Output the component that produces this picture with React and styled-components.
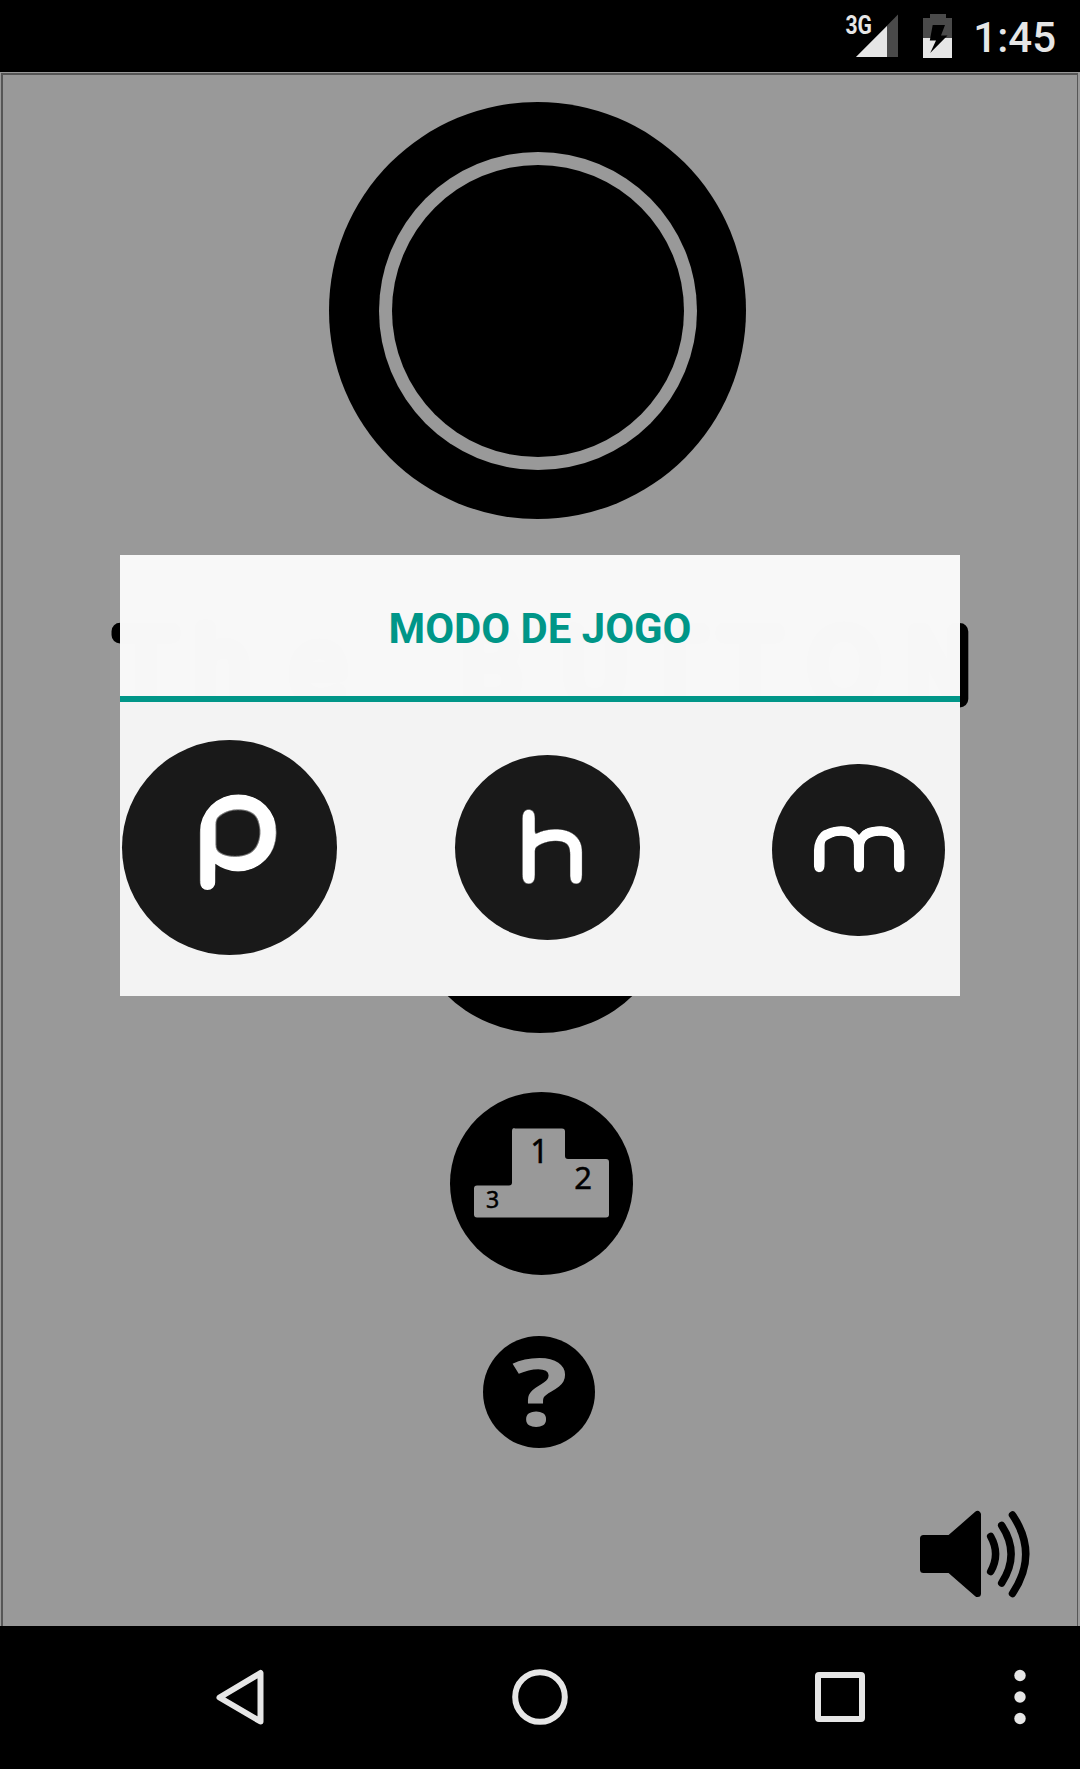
import styled, { createGlobalStyle } from 'styled-components'

const GlobalStyle = createGlobalStyle`
    body {
        margin: 0;
        background-color: #000;
        font-family: Roboto, 'Liberation Sans', sans-serif;
    }

    * {
        box-sizing: border-box;
    }

    svg {
        display: block;
        overflow: visible;
    }

    button {
        border: 0;
        padding: 0;
        background: none;
    }
`

const Screen = styled.div`
    position: relative;
    display: flex;
    flex-direction: column;

    width: 1080px;
    height: 1769px;
    overflow: hidden;
    background-color: #000;
`

const StatusBar = styled.header`
    display: flex;
    align-items: flex-start;
    justify-content: flex-end;
    flex: none;

    height: 72px;
    padding-right: 24px;
`

const StatusIcon = styled.svg`
    margin-right: ${({ $gap }) => $gap}px;
`

const Clock = styled.span`
    padding-top: 13px;

    color: #e6e6e6;
    font-size: 42px;
    font-weight: 500;
    line-height: 50px;
`

const Stage = styled.main`
    flex: 1;

    padding: 1px 2px 0 1px;
    background-color: #999;
`

const Frame = styled.div`
    display: flex;
    flex-direction: column;
    align-items: center;

    height: 100%;
    border: solid #565656;
    border-width: 2px 1px 0 2px;
`

const Disc = styled.div`
    display: flex;
    align-items: center;
    justify-content: center;
    flex: none;

    width: ${({ $size }) => $size}px;
    height: ${({ $size }) => $size}px;
    margin-top: ${({ $top }) => $top || 0}px;
    margin-left: ${({ $shift }) => $shift || 0}px;
    border-radius: 50%;
    background-color: ${({ $color }) => $color || '#000'};
`

const Title = styled.svg`
    flex: none;
    margin-top: 81px;

    fill: #000;
    stroke: #000;
    stroke-linejoin: round;
    font-family: 'DejaVu Sans Light', 'DejaVu Sans', sans-serif;
    font-weight: 200;
`

const Sound = styled.button`
    align-self: flex-end;
    margin-top: 62px;
    margin-right: 47px;
`

const Dialog = styled.section`
    position: absolute;
    top: 555px;
    left: 120px;

    width: 840px;
    height: 441px;
`

const DialogTitle = styled.h1`
    display: flex;
    align-items: center;
    justify-content: center;

    height: 147px;
    margin: 0;
    border-bottom: 6px solid #009688;
    padding-top: 5px;
    background-color: rgba(249, 249, 249, 0.992);
    background-clip: padding-box;

    color: #009688;
    font-size: 41.9px;
    font-weight: 700;
`

const Modes = styled.div`
    display: flex;
    align-items: flex-start;

    height: 294px;
    background-color: #f3f3f3;
`

const LetterSvg = styled.svg`
    fill: #fff;
    font-family: Lato, sans-serif;
    font-weight: 100;
`

const NavBar = styled.nav`
    display: flex;
    align-items: center;
    flex: none;

    height: 143px;
    padding-bottom: 2px;
    padding-left: 216px;
`

const NavButton = styled.button`
    margin-right: ${({ $gap }) => $gap || 0}px;

    svg {
        fill: none;
        stroke: #e6e6e6;
        stroke-width: 6;
        stroke-linejoin: round;
    }
`

const Status = () => (
    <StatusBar>
        <StatusIcon $gap={25} width="54" height="60" viewBox="844 0 54 60">
            <path d="M898 14.500V57H856z" fill="#4a4a4a" />
            <path d="M887 26V57H856z" fill="#e6e6e6" />
            <text x="845.500" y="33.500" fill="#e6e6e6" fontSize="26" fontWeight="700" textLength="26.500" lengthAdjust="spacingAndGlyphs">3G</text>
        </StatusIcon>
        <StatusIcon $gap={21} width="29" height="60" viewBox="923 0 29 60">
            <path d="M930 14h16v4h6v40h-29V18h7z" fill="#4a4a4a" />
            <path d="M923 38h29v20h-29z" fill="#e6e6e6" />
            <path d="M932.700 25H945L941 35.500H947.500L930.200 53L936 40.500H929.800z" fill="#000" />
        </StatusIcon>
        <Clock>1:45</Clock>
    </StatusBar>
)

const Podium = () => (
    <svg width="183" height="183" viewBox="450 1091.500 183 183">
        <path
            d="M514.500 1128h47.500q3 0 3 3v24.500q0 3 3 3h38q3 0 3 3v52.500q0 3-3 3H477q-3 0-3-3v-26q0-3 3-3h32q3 0 3-3v-51.500q0-3 2.500-3z"
            fill="#999"
        />
        <g fill="#000" stroke="#000" strokeWidth="0.500" fontFamily="'Noto Sans', sans-serif" textAnchor="middle">
            <text x="539.500" y="1162" fontSize="32">1</text>
            <text x="583" y="1188.500" fontSize="31">2</text>
            <text x="492.500" y="1207" fontSize="23">3</text>
        </g>
    </svg>
)

const Help = () => (
    <svg width="112" height="112" viewBox="483 1336 112 112">
        <text transform="translate(540 1426) scale(1.24 1)" fill="#999" fontFamily="'Open Sans', sans-serif" fontSize="94" fontWeight="700" textAnchor="middle">?</text>
    </svg>
)

const Speaker = () => (
    <svg width="110" height="88" viewBox="920 1510 110 88" stroke="#000" strokeLinecap="round" strokeLinejoin="round">
        <path d="M923.500 1538.500H950L977.500 1514.500V1593.500L950 1569.500H923.500z" strokeWidth="7" />
        <g fill="none" strokeWidth="7.500">
            <path d="M990.700 1536.500Q1000.500 1554 990.700 1571.500" />
            <path d="M1001.700 1525.500Q1020.500 1554 1001.700 1583" />
            <path d="M1012.500 1515Q1039 1554 1012.500 1593.500" />
        </g>
    </svg>
)

// Thickens a hairline letter evenly, so that stretching it keeps one stroke width with round ends
const Letter = ({ children, size, x, y, scale, fontSize, spread, cutoff, clip }) => (
    <LetterSvg width={size} height={size} viewBox={`0 0 ${size} ${size}`}>
        <defs>
            <filter id={`round-${children}`} filterUnits="userSpaceOnUse" x="0" y="0" width={size} height={size} colorInterpolationFilters="sRGB">
                <feGaussianBlur stdDeviation="1.200" />
                <feComponentTransfer>
                    <feFuncA type="linear" slope="8" intercept="-0.500" />
                </feComponentTransfer>
                <feGaussianBlur stdDeviation={spread} />
                <feComponentTransfer>
                    <feFuncA type="linear" slope="16" intercept={0.5 - 16 * cutoff} />
                </feComponentTransfer>
            </filter>
            <clipPath id={`clip-${children}`}>
                {clip || <rect width={size} height={size} />}
            </clipPath>
        </defs>
        <g clipPath={`url(#clip-${children})`}>
            <g filter={`url(#round-${children})`}>
                <text transform={`translate(${x} ${y}) scale(${scale})`} fontSize={fontSize} textAnchor="middle">{children}</text>
            </g>
        </g>
    </LetterSvg>
)

export default function App() {
    return (
        <Screen>
            <GlobalStyle />
            <Status />
            <Stage>
                <Frame>
                    <Disc $size={417} $top={27} $shift={-5}>
                        <Disc $size={318} $color="#999">
                            <Disc $size={292} />
                        </Disc>
                    </Disc>
                    <Title width="1074" height="120" viewBox="3 600 1074 120" strokeWidth="17">
                        <text x="118 193 290" y="698.500" fontSize="92">The</text>
                        <text x="460 561 647 722 808 905" y="698.500" fontSize="92">BUTTON</text>
                    </Title>
                    <Disc $size={268} $top={45} $shift={-1} />
                    <Disc $size={183} $top={59} $shift={3}>
                        <Podium />
                    </Disc>
                    <Disc $size={112} $top={61} $shift={-2}>
                        <Help />
                    </Disc>
                    <Sound aria-label="Som">
                        <Speaker />
                    </Sound>
                </Frame>
            </Stage>
            <NavBar>
                <NavButton $gap={248} aria-label="Voltar">
                    <svg width="48" height="56" viewBox="0 0 48 56">
                        <path d="M3.500 28.500L44.500 4V52.500z" />
                    </svg>
                </NavButton>
                <NavButton $gap={247} aria-label="Início">
                    <svg width="56" height="56" viewBox="0 0 56 56">
                        <circle cx="28" cy="28" r="24.800" />
                    </svg>
                </NavButton>
                <NavButton $gap={148.5} aria-label="Recentes">
                    <svg width="50" height="50" viewBox="0 0 50 50">
                        <rect x="3" y="3" width="44" height="44" rx="1" />
                    </svg>
                </NavButton>
                <NavButton aria-label="Menu">
                    <svg width="12" height="56" viewBox="0 0 12 56">
                        <g fill="#e6e6e6" stroke="none">
                            <circle cx="6" cy="6.500" r="5.700" />
                            <circle cx="6" cy="28" r="5.700" />
                            <circle cx="6" cy="49.500" r="5.700" />
                        </g>
                    </svg>
                </NavButton>
            </NavBar>
            <Dialog>
                <DialogTitle>MODO DE JOGO</DialogTitle>
                <Modes>
                    <Disc as="button" $size={215} $top={38} $shift={2} $color="#191919">
                        <Letter
                            size={215}
                            x={113.8}
                            y={123.8}
                            scale="1.31 1.03"
                            fontSize={122}
                            spread={3.5}
                            cutoff={0.052}
                            clip={
                                <>
                                    <circle cx="116.300" cy="92.800" r="38.600" />
                                    <rect x="77.700" y="85" width="15.600" height="65" rx="7.800" />
                                </>
                            }
                        >
                            p
                        </Letter>
                    </Disc>
                    <Disc as="button" $size={185} $top={53} $shift={118} $color="#191919">
                        <Letter size={185} x={97} y={125} scale="1.58 1.09" fontSize={85} spread={2.6} cutoff={0.062}>h</Letter>
                    </Disc>
                    <Disc as="button" $size={172.5} $top={61.5} $shift={132} $color="#191919">
                        <Letter
                            size={173}
                            x={87}
                            y={106}
                            scale="1.88 1.1"
                            fontSize={71}
                            spread={2}
                            cutoff={0.08}
                            clip={
                                <>
                                    <circle cx="67" cy="87" r="25" />
                                    <circle cx="107" cy="87" r="25" />
                                    <rect x="41" y="87" width="92" height="40" />
                                </>
                            }
                        >
                            m
                        </Letter>
                    </Disc>
                </Modes>
            </Dialog>
        </Screen>
    )
}
